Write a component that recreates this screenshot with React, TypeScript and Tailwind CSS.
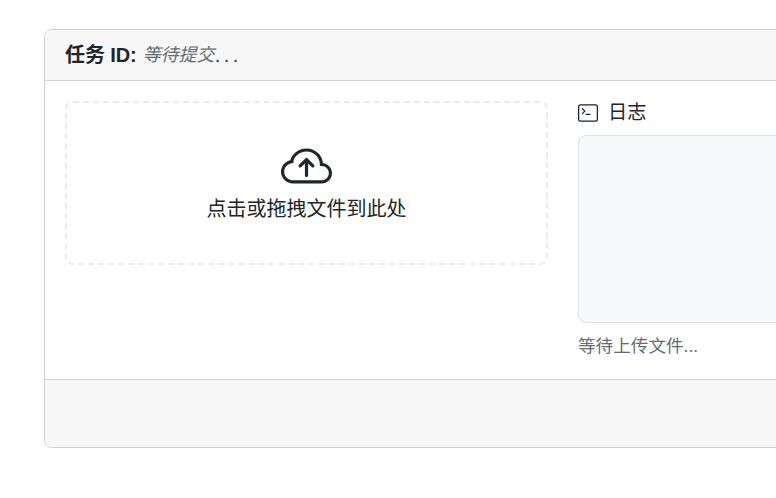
const cjk = "font-['Liberation_Sans','Noto_Sans_CJK_SC',sans-serif]";

function CloudIcon() {
  return (
    <svg xmlns="http://www.w3.org/2000/svg" width="51" height="51" viewBox="0 0 16 16" fill="currentColor">
      <path fillRule="evenodd" d="M7.646 5.146a.5.5 0 0 1 .708 0l2 2a.5.5 0 0 1-.708.708L8.5 6.707V10.5a.5.5 0 0 1-1 0V6.707L6.354 7.854a.5.5 0 1 1-.708-.708z" />
      <path d="M4.406 3.342A5.53 5.53 0 0 1 8 2c2.69 0 4.923 2 5.166 4.579C14.758 6.804 16 8.137 16 9.773 16 11.569 14.502 13 12.687 13H3.781C1.708 13 0 11.366 0 9.318c0-1.763 1.266-3.223 2.942-3.593.143-.863.698-1.723 1.464-2.383m.653.757c-.757.653-1.153 1.44-1.153 2.056v.448l-.445.049C2.064 6.805 1 7.952 1 9.318 1 10.785 2.23 12 3.781 12h8.906C13.98 12 15 10.988 15 9.773c0-1.216-1.02-2.228-2.313-2.228h-.5v-.5C12.188 4.825 10.328 3 8 3a4.53 4.53 0 0 0-2.941 1.1z" />
    </svg>
  );
}

function TerminalIcon() {
  return (
    <svg xmlns="http://www.w3.org/2000/svg" width="20" height="20" viewBox="0 0 16 16" fill="currentColor">
      <path d="M6 9a.5.5 0 0 1 .5-.5h3a.5.5 0 0 1 0 1h-3A.5.5 0 0 1 6 9M3.854 4.146a.5.5 0 1 0-.708.708L4.793 6.5 3.146 8.146a.5.5 0 1 0 .708.708l2-2a.5.5 0 0 0 0-.708z" />
      <path d="M2 1a2 2 0 0 0-2 2v10a2 2 0 0 0 2 2h12a2 2 0 0 0 2-2V3a2 2 0 0 0-2-2zm12 1a1 1 0 0 1 1 1v10a1 1 0 0 1-1 1H2a1 1 0 0 1-1-1V3a1 1 0 0 1 1-1z" />
    </svg>
  );
}

export default function App() {
  return (
    <div className={`w-[776px] h-[498px] overflow-hidden bg-white pl-[44px] pt-[29px] text-[#212529] ${cjk}`}>
      <div className="w-[1000px] h-[419px] flex flex-col rounded-[8px] border border-[#d0d0d0] bg-white">
        <div className="h-[51px] shrink-0 flex items-center px-[20px] bg-[#f7f7f7] border-b border-[#d0d0d0] rounded-t-[7px]">
          <span className="text-[20px] font-semibold tracking-[-0.1px]">任务 ID:</span>
          <span className="ml-[6px] text-[18px] italic text-[#636b73]">等待提交</span>
          <span className="text-[20px] tracking-[3.5px] text-[#343a40]">...</span>
        </div>
        <div className="flex-1 flex gap-[30px] p-[20px]">
          <div className="w-[483px] h-[164px] flex flex-col items-center rounded-[8px] border-2 border-dashed border-[#e9ecef] pt-[39px]">
            <CloudIcon />
            <p className="text-[20px] leading-[30px] mt-[1px]">点击或拖拽文件到此处</p>
          </div>
          <div className="w-[400px] flex flex-col">
            <div className="h-[24px] flex items-center gap-[10px] text-[19.2px]">
              <span className="text-[#14203c]"><TerminalIcon /></span>
              <span className="mt-[1px]">日志</span>
            </div>
            <div className="mt-[10px] h-[188px] rounded-[8px] border border-[#dee2e6] bg-[#f8f9fa]" />
            <p className="mt-[10px] text-[17.6px] leading-[26px] text-[#636b73]">等待上传文件...</p>
          </div>
        </div>
        <div className="h-[68px] shrink-0 bg-[#f7f7f7] border-t border-[#d0d0d0] rounded-b-[7px]" />
      </div>
    </div>
  );
}
